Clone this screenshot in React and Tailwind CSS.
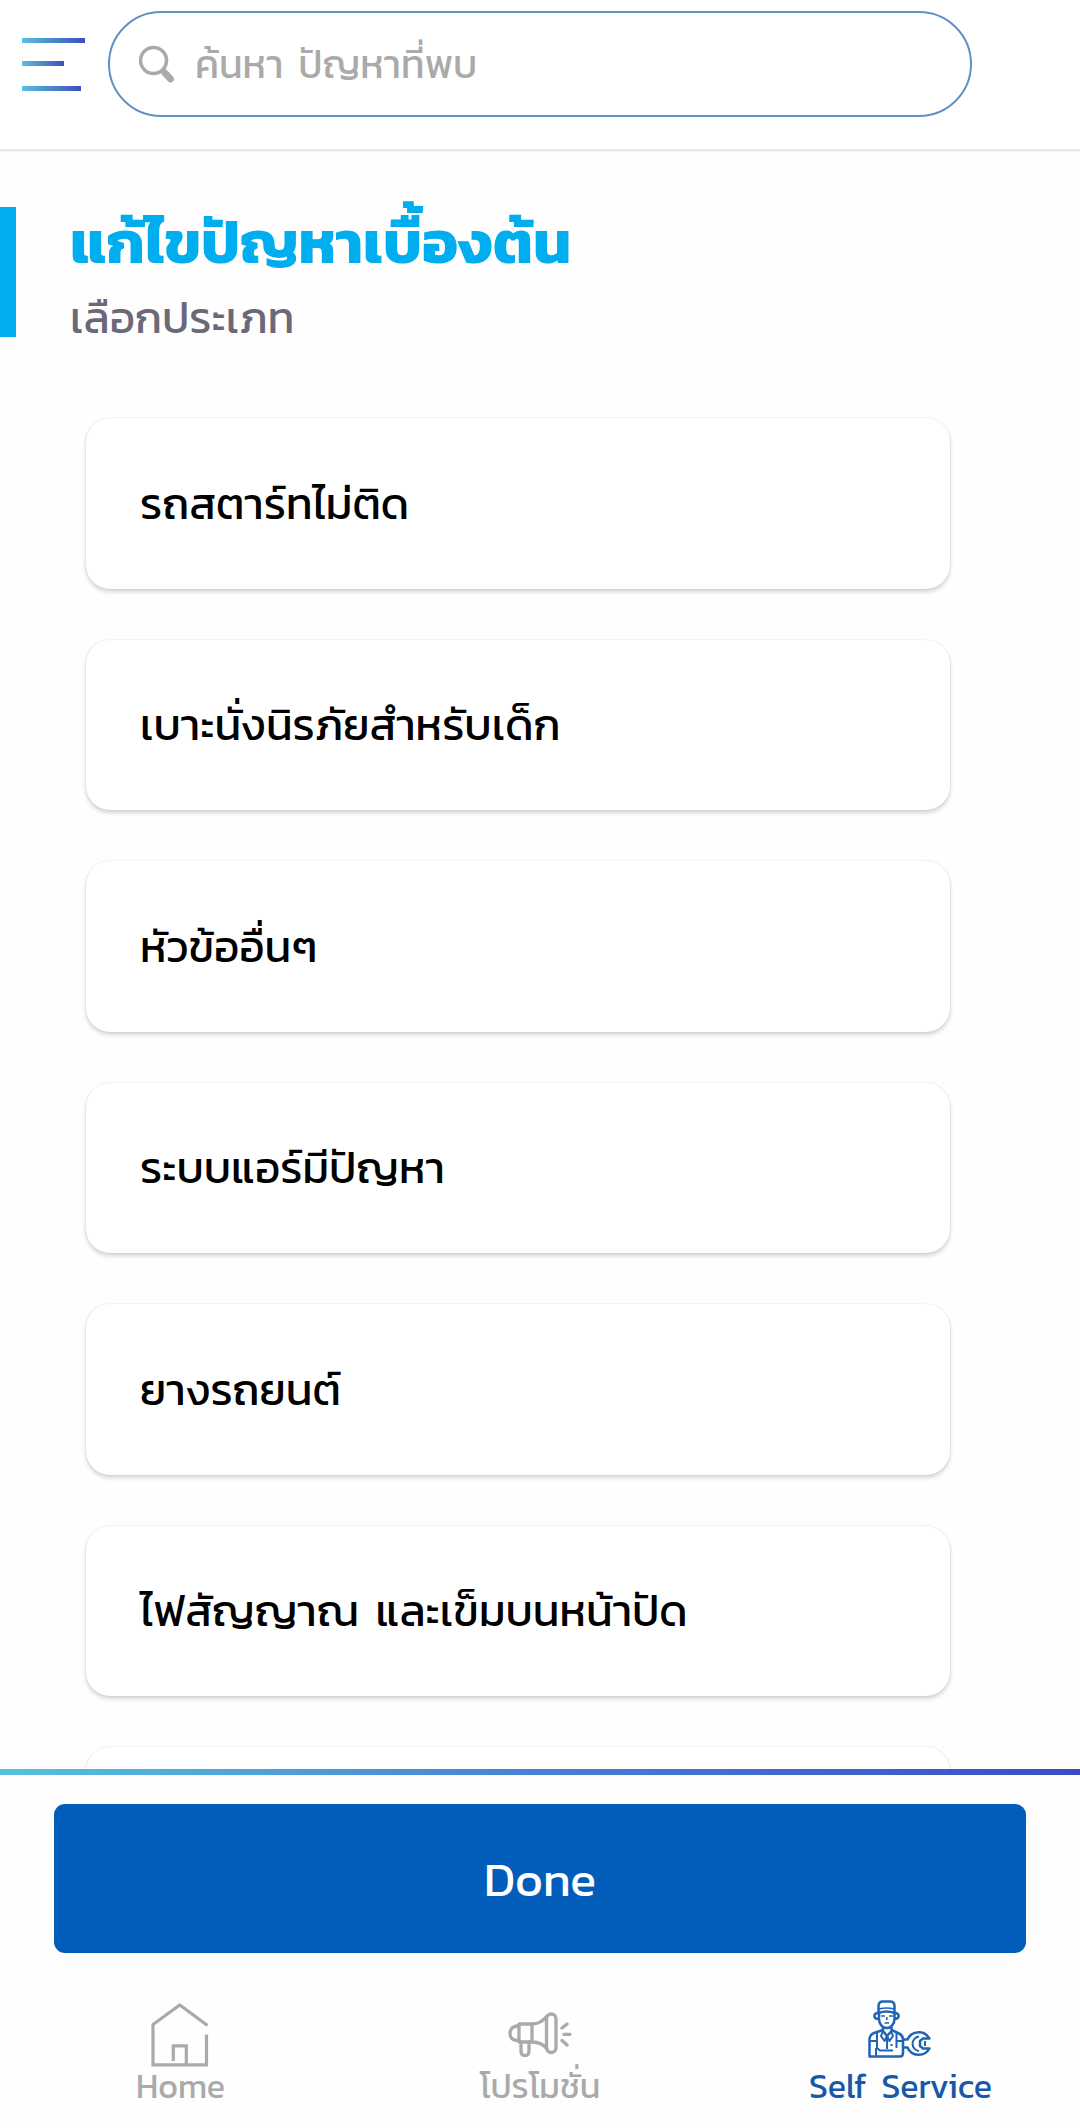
import React, { useState } from 'react'

const topics = [
  { id: 1, title: 'รถสตาร์ทไม่ติด' },
  { id: 2, title: 'เบาะนั่งนิรภัยสำหรับเด็ก' },
  { id: 3, title: 'หัวข้ออื่นๆ' },
  { id: 4, title: 'ระบบแอร์มีปัญหา' },
  { id: 5, title: 'ยางรถยนต์' },
  { id: 6, title: 'ไฟสัญญาณ และเข็มบนหน้าปัด' },
  { id: 7, title: '' },
]

function MenuIcon() {
  return (
    <svg width="64" height="54" viewBox="0 0 64 54">
      <defs>
        <linearGradient id="menuLine" x1="0" x2="1" y1="0" y2="0">
          <stop offset="0" stopColor="#5bbfdc" />
          <stop offset="0.5" stopColor="#4a87cc" />
          <stop offset="1" stopColor="#3d50bb" />
        </linearGradient>
      </defs>
      <rect x="0" y="0" width="63" height="5" fill="url(#menuLine)" />
      <rect x="0" y="23" width="42" height="5" fill="url(#menuLine)" />
      <rect x="0" y="48" width="59" height="5" fill="url(#menuLine)" />
    </svg>
  )
}

function SearchIcon() {
  return (
    <svg width="35" height="38" viewBox="0 0 35 38" fill="none" stroke="#aaaaaa">
      <circle cx="14.5" cy="15.5" r="13" strokeWidth="3.6" />
      <path d="M23 25l3 3" strokeWidth="4" />
      <path d="M26 28l5.500 6" strokeWidth="7" strokeLinecap="round" />
    </svg>
  )
}

function HomeIcon() {
  return (
    <svg width="58" height="64" viewBox="0 0 58 64" fill="none" stroke="#aaaaaa" strokeWidth="3.200">
      <path d="M56.500 22.500L28.800 2 2 21.500V61.800H55.500V31.500" />
      <path d="M22.300 58V42.800H35.300V61" />
    </svg>
  )
}

function PromoIcon() {
  return (
    <svg width="64" height="46" viewBox="0 0 64 46" fill="none" stroke="#aaaaaa" strokeWidth="3.300" strokeLinejoin="round" strokeLinecap="round">
      <path d="M11 12H24V30H11z" />
      <path d="M10 14C4 14 2 18 2 21.500S4 28.500 10 28.500" />
      <path d="M24 12C31 12 36 8 39 4M24 30C31 30 36 33 39 37" />
      <rect x="38.500" y="2" width="9.500" height="38.500" rx="4.700" />
      <path d="M13 30V39Q13 43.500 17 43.500T21 39V30" />
      <path d="M54 16L59 12M56 22.300H62M54 28.500L59 33" />
    </svg>
  )
}

function MechanicIcon() {
  return (
    <svg width="64" height="58" viewBox="0 0 64 58" fill="none" stroke="#2163b4" strokeWidth="2.500" strokeLinejoin="round">
      <path d="M10.500 13V6Q10.500 1.500 15 1.500H22Q26.500 1.500 26.500 6V13Q18.500 10 10.500 13z" />
      <path d="M11 9Q18.500 7 26 9" strokeWidth="1.600" />
      <path d="M10.500 13C5 12.500 5 19 10.500 19M26.500 13C32 12.500 32 19 26.500 19" />
      <path d="M11 13V19C11 24 14.500 28 18.700 28S26.500 24 26.500 19V13" />
      <path d="M13 16H17M21 16H25M16.500 23H21M18.800 17V20" strokeWidth="1.600" />
      <path d="M15 27V31L19 36 23.500 31V27" />
      <path d="M15 30L6 33Q2 34.500 1.500 39V56.500H32Q35 56.500 35 53V39Q34.500 35 31 33.500L23.500 30" />
      <path d="M9 33V48M28.500 33V48M2 41H9M28.500 41H35M9 48L12 50.500H25M8 48V56M15 31L13 36 16.500 41 19 36 21.500 41 25 36 23 31M19 38V49" strokeWidth="2" />
      <path d="M23.500 44V46" strokeWidth="2" />
      {/* wrench */}
      <path d="M35 39.500H39.500A12.300 12.300 0 0 1 61.500 38.500H55L52 41V46L55 48.500H61.500A12.300 12.300 0 0 1 39.500 47.500H35" />
      <path d="M51 36.500A7.300 7.300 0 0 0 51 51M57 41V46" strokeWidth="2" />
    </svg>
  )
}

function App() {
  const [search, setSearch] = useState('')

  return (
    <div className="flex h-[2128px] w-[1080px] flex-col overflow-hidden bg-[#fefefe] font-['Kanit','Prompt','Noto_Sans_Thai','Noto_Sans',sans-serif]">
      <header className="flex h-[151px] shrink-0 items-start border-b-2 border-[#e6e6e6] bg-white pl-[22px] shadow-[0_1px_3px_rgba(0,0,0,0.04)]">
        <div className="mt-[38px] w-[86px]">
          <MenuIcon />
        </div>
        <div className="mt-[11px] flex h-[106px] w-[864px] items-center rounded-full border-[2.500px] border-[#628fc8] pl-[29px]">
          <SearchIcon />
          <input
            className="ml-[21px] w-[600px] bg-transparent text-[39px] leading-[60px] [word-spacing:6px] outline-none placeholder:text-[#aaaaaa]"
            value={search}
            onChange={(e) => setSearch(e.target.value)}
            placeholder="ค้นหา ปัญหาที่พบ"
          />
        </div>
      </header>

      <main className="min-h-0 flex-1 overflow-hidden">
        <div className="mt-[56px] h-[130px] border-l-[16px] border-[#00adef] pl-[54px]">
          <h1 className="h-[79px] text-[60.400px] leading-[70px] font-bold whitespace-nowrap text-[#00adef]">แก้ไขปัญหาเบื้องต้น</h1>
          <p className="text-[44px] leading-[64px] whitespace-nowrap text-[#6b6878]">เลือกประเภท</p>
        </div>

        <div className="mt-[81px] ml-[86px] flex w-[864px] flex-col gap-[51px]">
          {topics.map((topic) => (
            <div
              key={topic.id}
              className="flex h-[170.500px] shrink-0 items-center rounded-[24px] bg-white pt-px pl-[54px] shadow-[0_3px_4px_rgba(0,0,0,0.16),0_0_2px_rgba(0,0,0,0.12)]"
            >
              <span className="text-[44px] whitespace-nowrap text-black [word-spacing:6.500px]">{topic.title}</span>
            </div>
          ))}
        </div>
      </main>

      <footer className="h-[359px] shrink-0 bg-[#fefefe]">
        <div className="h-[6px] bg-linear-to-r from-[#57c0de] via-[#4780d4] to-[#3b4bc8]" />
        <button className="mt-[29px] ml-[54px] flex h-[149px] w-[972px] items-center justify-center rounded-[11px] bg-[#025cb9] text-[48px] text-white">
          Done
        </button>
        <nav className="flex text-[34px] leading-[44px] text-[#aaaaaa]">
          <a className="flex w-[360px] flex-col items-center">
            <div className="mt-[50px] h-[61px]"><HomeIcon /></div>
            <span className="pl-px">Home</span>
          </a>
          <a className="flex w-[360px] flex-col items-center">
            <div className="mt-[59px] h-[52px]"><PromoIcon /></div>
            <span>โปรโมชั่น</span>
          </a>
          <a className="flex w-[360px] flex-col items-center text-[#1659a8]">
            <div className="mt-[47px] h-[64px]"><MechanicIcon /></div>
            <span className="pl-px [word-spacing:7px]">Self Service</span>
          </a>
        </nav>
      </footer>
    </div>
  )
}

export default App
